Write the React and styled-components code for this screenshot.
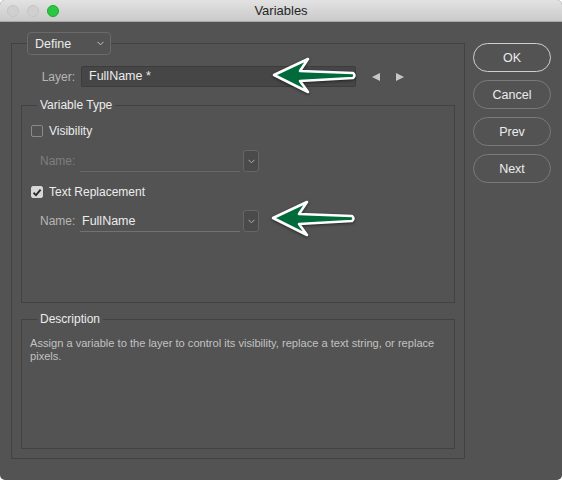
import styled, { createGlobalStyle } from "styled-components";

const GlobalStyle = createGlobalStyle`
  html, body {
    margin: 0;
    padding: 0;
    background: #ffffff;
  }
  body {
    font-family: "Liberation Sans", Arial, sans-serif;
  }
  * {
    box-sizing: border-box;
  }
`;

const Chevron = ({ color = "#c4c4c4" }) => (
  <svg width="7" height="5" viewBox="0 0 7 5">
    <polyline points="0.5,0.8 3.5,3.8 6.5,0.8" fill="none" stroke={color} strokeWidth="1" />
  </svg>
);

const GreenArrow = () => (
  <svg width="100" height="42" viewBox="0 0 100 42">
    <path
      d="M14 20 L48 4 L40 16 L93 18 Q96 20.5 93 23 L40 26 L48 37 Z"
      fill="#006a3a"
      stroke="#ffffff"
      strokeWidth="2.6"
      strokeLinejoin="round"
    />
  </svg>
);

const App = () => {
  return (
    <>
      <GlobalStyle />
      <Window>
        <TitleBar>
          <Lights>
            <Light />
            <Light />
            <Light $color="#28c840" $border="#22a535" />
          </Lights>
          <Title>Variables</Title>
        </TitleBar>

        <Body>
          <LeftColumn>
            <OuterBox>
              <DefineSelect>
                <span>Define</span>
                <Chevron />
              </DefineSelect>

              <LayerRow>
                <RowLabel $width="54px">Layer:</RowLabel>
                <LayerInput>FullName *</LayerInput>
                <Stepper>
                  <Triangle $dir="left" />
                  <Triangle $dir="right" />
                </Stepper>
              </LayerRow>

              <GroupBox $height="198px">
                <Legend>Variable Type</Legend>
                <CheckRow $top="12px">
                  <CheckBox />
                  <CheckLabel>Visibility</CheckLabel>
                </CheckRow>
                <NameRow $top="12px">
                  <NameLabel $disabled>Name:</NameLabel>
                  <UnderlineField $disabled />
                  <SmallDrop>
                    <Chevron color="#b0b0b0" />
                  </SmallDrop>
                </NameRow>
                <CheckRow $top="13px">
                  <CheckBox $checked>
                    <svg width="10" height="9" viewBox="0 0 10 9">
                      <polyline
                        points="1.5,4.8 4,7.2 8.6,1.6"
                        fill="none"
                        stroke="#2a2a2a"
                        strokeWidth="1.9"
                      />
                    </svg>
                  </CheckBox>
                  <CheckLabel>Text Replacement</CheckLabel>
                </CheckRow>
                <NameRow $top="11px">
                  <NameLabel>Name:</NameLabel>
                  <UnderlineField>FullName</UnderlineField>
                  <SmallDrop>
                    <Chevron color="#b0b0b0" />
                  </SmallDrop>
                </NameRow>
              </GroupBox>

              <GroupBox $height="130px" $top="16px">
                <Legend>Description</Legend>
                <DescText>
                  Assign a variable to the layer to control its visibility, replace a text string, or replace
                  pixels.
                </DescText>
              </GroupBox>
            </OuterBox>
          </LeftColumn>

          <ButtonColumn>
            <DialogButton $primary>OK</DialogButton>
            <DialogButton>Cancel</DialogButton>
            <DialogButton>Prev</DialogButton>
            <DialogButton>Next</DialogButton>
          </ButtonColumn>
        </Body>

        <Callout $left="260px" $top="55px">
          <GreenArrow />
        </Callout>
        <Callout $left="259px" $top="198px">
          <GreenArrow />
        </Callout>
      </Window>
    </>
  );
};

export default App;

const Window = styled.div`
  position: relative;
  width: 562px;
  height: 480px;
  background: #535353;
  border-radius: 5px;
  overflow: hidden;
`;

const TitleBar = styled.div`
  position: relative;
  height: 22px;
  display: flex;
  align-items: center;
  justify-content: center;
  background: linear-gradient(to bottom, #e2e2e2, #cacaca);
  border-bottom: 1px solid #a8a8a8;
`;

const Lights = styled.div`
  position: absolute;
  left: 7px;
  top: 5px;
  display: flex;
  gap: 8px;
`;

const Light = styled.span`
  width: 12px;
  height: 12px;
  border-radius: 50%;
  background: ${(p) => p.$color || "#d0d0d0"};
  border: 1px solid ${(p) => p.$border || "#c4c4c4"};
`;

const Title = styled.div`
  font-size: 13px;
  color: #262626;
  line-height: 22px;
`;

const Body = styled.div`
  display: flex;
  gap: 8px;
  padding: 10px 0 0 11px;
`;

const LeftColumn = styled.div`
  width: 454px;
`;

const OuterBox = styled.div`
  margin-top: 11px;
  height: 416px;
  border: 1px solid #424242;
  padding: 0 9px 9px;
  display: flex;
  flex-direction: column;
`;

const DefineSelect = styled.div`
  margin: -12px 0 0 6px;
  width: 84px;
  height: 23px;
  display: flex;
  align-items: center;
  justify-content: space-between;
  padding: 0 6px 0 7px;
  border: 1px solid #6a6a6a;
  border-radius: 4px;
  background: #535353;
  color: #ececec;
  font-size: 12.5px;
`;

const LayerRow = styled.div`
  margin-top: 11px;
  height: 21px;
  display: flex;
  align-items: center;
  gap: 6px;
`;

const RowLabel = styled.div`
  width: ${(p) => p.$width};
  text-align: right;
  color: #b6b6b6;
  font-size: 12px;
`;

const LayerInput = styled.div`
  width: 275px;
  height: 21px;
  background: #464646;
  border: 1px solid #3c3c3c;
  border-radius: 2px;
  color: #ececec;
  font-size: 12.5px;
  line-height: 19px;
  padding-left: 7px;
`;

const Stepper = styled.div`
  display: flex;
  gap: 16px;
  margin-left: 10px;
`;

const Triangle = styled.span`
  width: 0;
  height: 0;
  border-top: 4px solid transparent;
  border-bottom: 4px solid transparent;
  ${(p) =>
    p.$dir === "left"
      ? "border-right: 8px solid #c8c8c8;"
      : "border-left: 8px solid #c8c8c8;"}
`;

const GroupBox = styled.div`
  margin-top: ${(p) => p.$top || "18px"};
  height: ${(p) => p.$height};
  border: 1px solid #424242;
  display: flex;
  flex-direction: column;
  align-items: flex-start;
  padding: 0 9px;
`;

const Legend = styled.div`
  margin: -8px 0 0 6px;
  padding: 0 3px;
  background: #535353;
  color: #ececec;
  font-size: 12px;
  line-height: 14px;
`;

const CheckRow = styled.div`
  margin-top: ${(p) => p.$top};
  height: 14px;
  display: flex;
  align-items: center;
  gap: 6px;
`;

const CheckBox = styled.span`
  width: 12px;
  height: 12px;
  border-radius: 2px;
  display: flex;
  align-items: center;
  justify-content: center;
  border: 1px solid ${(p) => (p.$checked ? "#d4d4d4" : "#8a8a8a")};
  background: ${(p) => (p.$checked ? "#d8d8d8" : "transparent")};
`;

const CheckLabel = styled.span`
  color: #ececec;
  font-size: 12px;
`;

const NameRow = styled.div`
  margin-top: ${(p) => p.$top};
  height: 22px;
  display: flex;
  align-items: stretch;
  padding-left: 9px;
`;

const NameLabel = styled.span`
  width: 40px;
  color: ${(p) => (p.$disabled ? "#7e7e7e" : "#b6b6b6")};
  font-size: 12px;
  line-height: 22px;
`;

const UnderlineField = styled.div`
  width: 160px;
  border-bottom: 1px solid ${(p) => (p.$disabled ? "#686868" : "#727272")};
  color: #ececec;
  font-size: 12.5px;
  line-height: 22px;
  padding-left: 2px;
`;

const SmallDrop = styled.div`
  margin-left: 3px;
  width: 16px;
  display: flex;
  align-items: center;
  justify-content: center;
  border: 1px solid #666666;
  border-radius: 3px;
  background: #4a4a4a;
`;

const DescText = styled.p`
  margin: 11px 0 0 -1px;
  color: #c2c2c2;
  font-size: 11.1px;
  line-height: 12.5px;
`;

const ButtonColumn = styled.div`
  margin-top: 11px;
  width: 78px;
  display: flex;
  flex-direction: column;
  gap: 8px;
`;

const DialogButton = styled.button`
  height: 29px;
  border-radius: 15px;
  background: transparent;
  border: 1px solid ${(p) => (p.$primary ? "#cfcfcf" : "#7a7a7a")};
  color: #ececec;
  font-family: "Liberation Sans", Arial, sans-serif;
  font-size: 12.5px;
  padding: 0;
`;

const Callout = styled.div`
  position: absolute;
  left: ${(p) => p.$left};
  top: ${(p) => p.$top};
  line-height: 0;
  filter: drop-shadow(0 1px 1.5px rgba(0, 0, 0, 0.55));
`;
